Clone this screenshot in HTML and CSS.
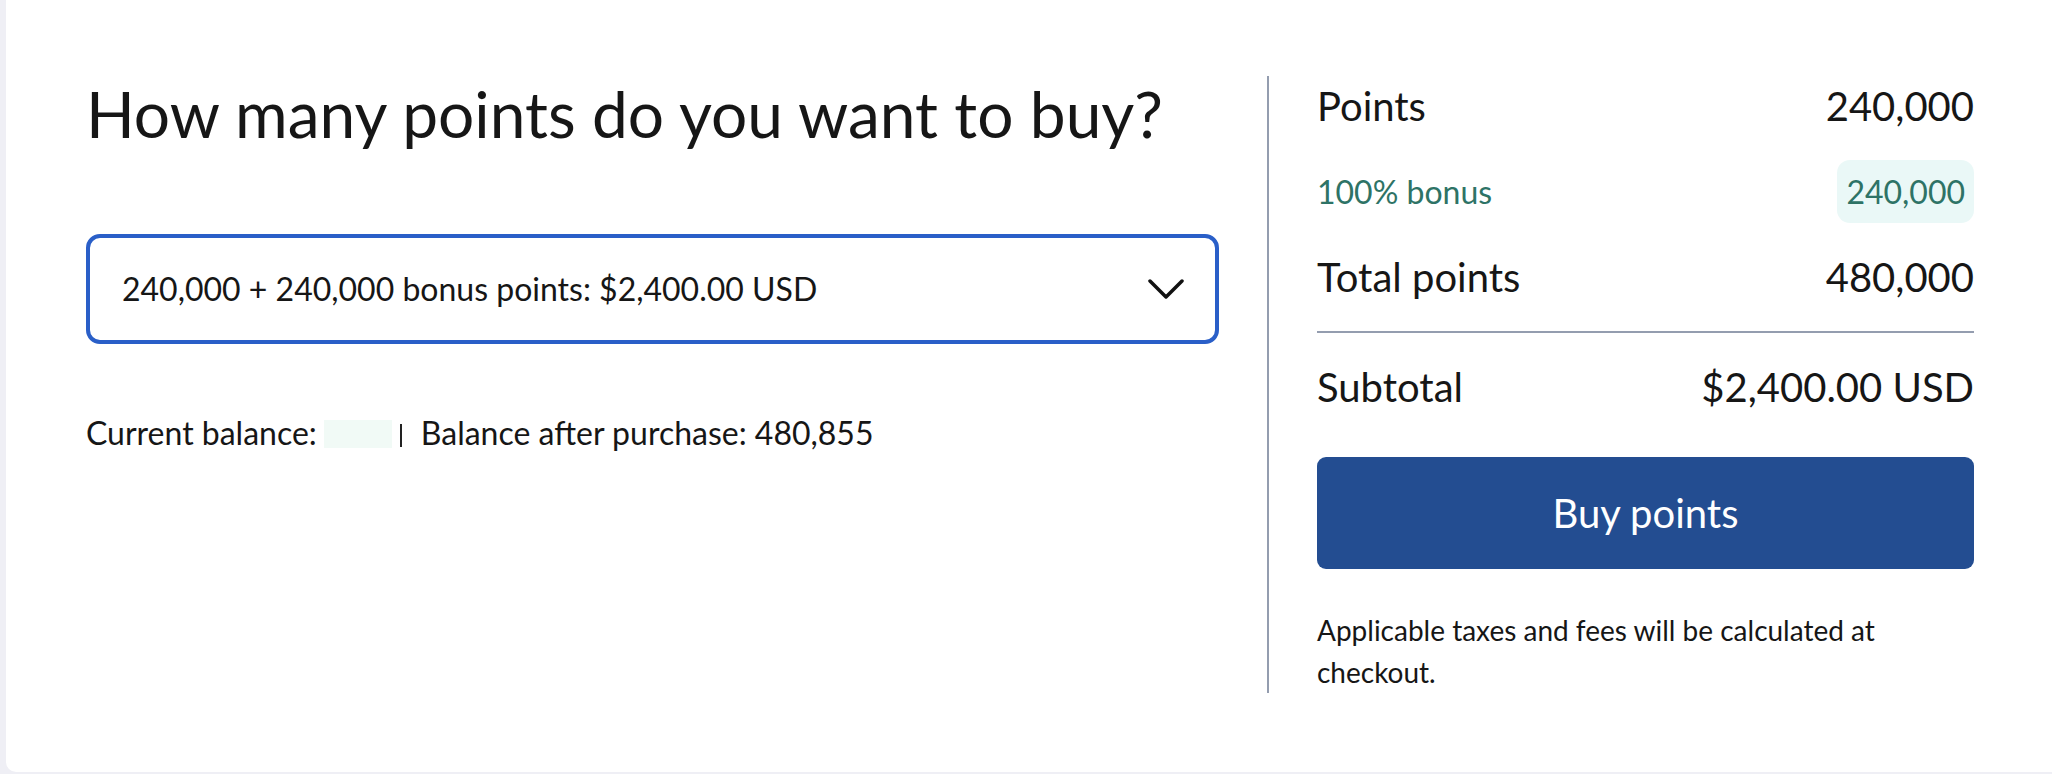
FILE: index.html
```html
<!DOCTYPE html>
<html lang="en">
<head>
    <meta charset="UTF-8">
    <meta name="viewport" content="width=device-width, initial-scale=1.0">
    <title>Buy points</title>
    <link rel="stylesheet" href="styles.css">
</head>
<body>
    <div class="card">
        <div class="panel">
            <div class="picker">
                <h1 class="title">How many points do you want to buy?</h1>

                <div class="select">
                    <span class="select-text">240,000 + 240,000 bonus points: $2,400.00 USD</span>
                    <svg class="chevron" width="36" height="20" viewBox="0 0 36 20">
                        <polyline points="2,2 18,18 34,2" fill="none" stroke="#111" stroke-width="3.5" stroke-linecap="round" stroke-linejoin="round"/>
                    </svg>
                </div>

                <p class="balance">
                    Current balance:<span class="masked"></span><span class="sep"></span>Balance after purchase: 480,855
                </p>
            </div>

            <div class="vline"></div>

            <div class="summary">
                <div class="row big">
                    <span>Points</span>
                    <span>240,000</span>
                </div>
                <div class="row bonus">
                    <span>100% bonus</span>
                    <span class="badge">240,000</span>
                </div>
                <div class="row big">
                    <span>Total points</span>
                    <span>480,000</span>
                </div>
                <div class="hline"></div>
                <div class="row big">
                    <span>Subtotal</span>
                    <span>$2,400.00 USD</span>
                </div>

                <button class="buy">Buy points</button>

                <p class="note">Applicable taxes and fees will be calculated at checkout.</p>
            </div>
        </div>
    </div>
</body>
</html>
```

FILE: styles.css
```css
/* page */
body {
    margin: 0;
    height: 774px;
    background-color: #efeff5;
    font-family: 'Lato', 'Liberation Sans', sans-serif;
    color: #161616;
    overflow: hidden;
}

/* white card, its left edge shows the grey page */
.card {
    margin-left: 6px;
    height: 772px;
    box-sizing: border-box;
    padding: 76px 0 0 80px;
    background-color: white;
    border-bottom-left-radius: 10px;
}

/* two columns with a line between them */
.panel {
    display: flex;
    gap: 48px;
}

/* left side */
.picker {
    width: 1133px;
}

.title {
    margin: 0;
    font-size: 64px;
    font-weight: 400;
    line-height: 1.2;
}

.select {
    margin-top: 81px;
    height: 110px;
    box-sizing: border-box;
    border: 4px solid #2a5fc8;
    border-radius: 14px;
    padding: 0 31px 0 32px;
    display: flex;
    align-items: center;
    justify-content: space-between;
    font-size: 32px;
}

.chevron {
    display: block;
}

.balance {
    margin: 69px 0 0;
    font-size: 32px;
    line-height: 40px;
}

.masked {
    display: inline-block;
    width: 68px;
    height: 28px;
    margin-left: 7px;
    vertical-align: -3px;
    background-color: #f1faf6;
}

.sep {
    display: inline-block;
    width: 2px;
    height: 23px;
    margin: 0 19px 0 8px;
    vertical-align: -2px;
    background-color: #222;
}

.vline {
    width: 2px;
    background-color: #949daf;
}

/* right side */
.summary {
    width: 657px;
    padding-top: 6px;
    display: flex;
    flex-direction: column;
    gap: 30px;
}

.row {
    display: flex;
    justify-content: space-between;
    align-items: center;
}

.big {
    font-size: 40px;
    line-height: 48px;
}

.bonus {
    font-size: 32px;
    color: #2e7366;
}

.badge {
    height: 63px;
    padding: 0 9px;
    display: flex;
    align-items: center;
    background-color: #eaf8f7;
    border-radius: 13px;
}

.hline {
    height: 2px;
    background-color: #949daf;
}

.buy {
    margin-top: 16px;
    height: 112px;
    border: none;
    border-radius: 9px;
    background-color: #234d91;
    color: white;
    font-family: inherit;
    font-size: 40px;
    cursor: pointer;
}

.note {
    margin: 10px 0 0;
    font-size: 28px;
    line-height: 42px;
}
```
